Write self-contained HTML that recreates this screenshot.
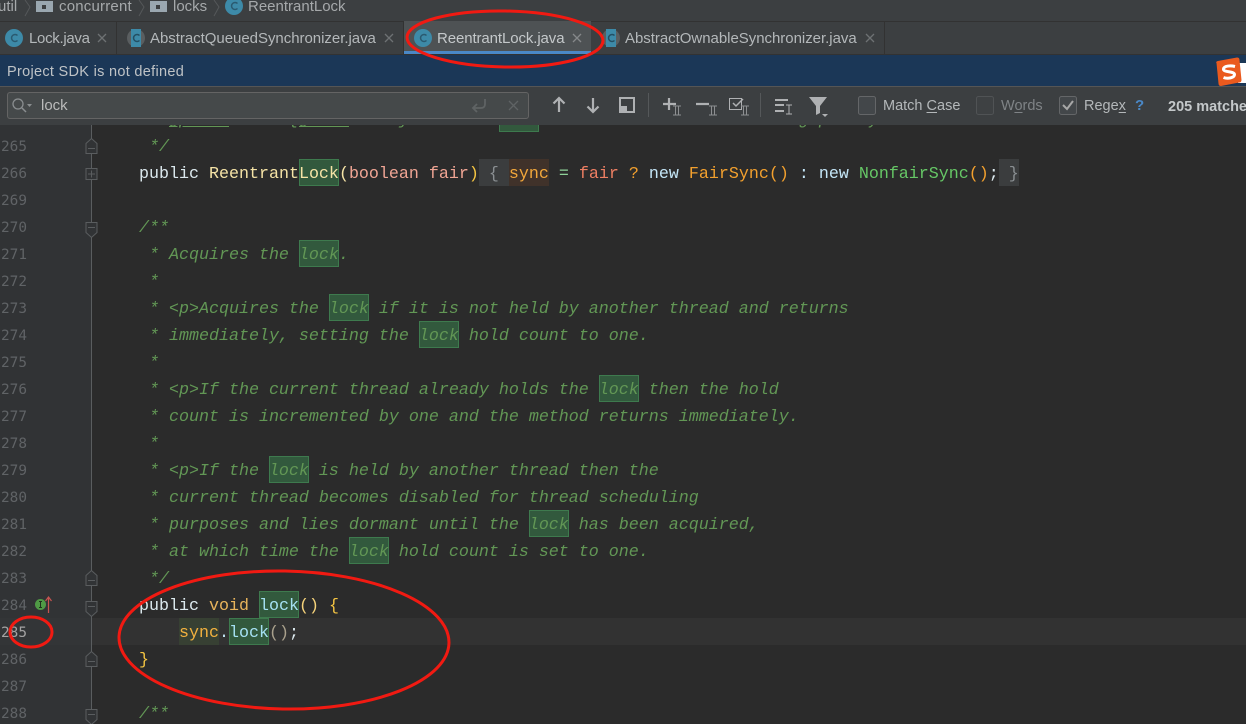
<!DOCTYPE html>
<html><head><meta charset="utf-8"><style>
html,body{margin:0;padding:0;background:#2b2b2b}
#r{position:relative;width:1246px;height:724px;overflow:hidden;background:#2b2b2b;font-family:"Liberation Sans",sans-serif}
.a{position:absolute}
.t{position:absolute;white-space:pre;color:#b4b8ba;font-size:15px;line-height:20px}
.l{position:absolute;left:139px;height:27px;white-space:pre;font:16.67px/27px "Liberation Mono",monospace;color:#629755;transform:translateY(2px)}
.c{font-style:italic}
.n{position:absolute;left:1px;font:14.4px/27px "DejaVu Sans Mono",monospace;color:#606366;transform:translateY(2px)}
.h{position:absolute;width:38px;height:25px;background:#32593d;border:1px solid #3e7a4e}
u{text-underline-offset:2px}
</style></head><body><div id="r">

<!-- editor backgrounds -->
<div class="a" style="left:0;top:124px;width:91px;height:600px;background:#313335"></div>
<div class="a" style="left:91px;top:618px;width:1155px;height:27px;background:#323232"></div>
<div class="a" style="left:0;top:618px;width:91px;height:27px;background:#333537"></div>

<!-- highlight boxes -->
<div class="h" style="left:499px;top:105px"></div>
<div class="h" style="left:299px;top:159px"></div>
<div class="h" style="left:299px;top:240px"></div>
<div class="h" style="left:329px;top:294px"></div>
<div class="h" style="left:419px;top:321px"></div>
<div class="h" style="left:599px;top:375px"></div>
<div class="h" style="left:269px;top:456px"></div>
<div class="h" style="left:529px;top:510px"></div>
<div class="h" style="left:349px;top:537px"></div>
<div class="h" style="left:259px;top:591px"></div>
<div class="h" style="left:229px;top:618px"></div>
<div class="a" style="left:479px;top:159px;width:30px;height:27px;background:#3b3d3e"></div>
<div class="a" style="left:509px;top:159px;width:40px;height:27px;background:#40322a"></div>
<div class="a" style="left:999px;top:159px;width:20px;height:27px;background:#3b3d3e"></div>
<div class="a" style="left:179px;top:618px;width:40px;height:27px;background:#374033"></div>

<!-- code -->
<div class="l c" style="top:105px"> * <u>@param</u> <span style="color:#c98a3a">fair</span> {<u>@code</u> true} if this lock should use a fair ordering policy.</div>
<div class="l c" style="top:132px"> */</div>
<div class="l" style="top:159px"><span style="color:#dce9ee">public</span> <span style="color:#f5e3a6">ReentrantLock</span><span style="color:#f5e3a6">(</span><span style="color:#f0a594">boolean fair</span><span style="color:#f5c542">)</span> <span style="color:#8a8f92">{</span> <span style="color:#f2a73b">sync</span> <span style="color:#8fd39a">=</span> <span style="color:#ee7f63">fair</span> <span style="color:#f2a02e">?</span> <span style="color:#c4e6f7">new</span> <span style="color:#f2a02e">FairSync()</span> <span style="color:#c4e6f7">:</span> <span style="color:#c4e6f7">new</span> <span style="color:#66c766">NonfairSync</span><span style="color:#f2a02e">()</span><span style="color:#dce9ee">;</span> <span style="color:#8a8f92">}</span></div>
<div class="l c" style="top:213px">/**</div>
<div class="l c" style="top:240px"> * Acquires the lock.</div>
<div class="l c" style="top:267px"> *</div>
<div class="l c" style="top:294px"> * &lt;p&gt;Acquires the lock if it is not held by another thread and returns</div>
<div class="l c" style="top:321px"> * immediately, setting the lock hold count to one.</div>
<div class="l c" style="top:348px"> *</div>
<div class="l c" style="top:375px"> * &lt;p&gt;If the current thread already holds the lock then the hold</div>
<div class="l c" style="top:402px"> * count is incremented by one and the method returns immediately.</div>
<div class="l c" style="top:429px"> *</div>
<div class="l c" style="top:456px"> * &lt;p&gt;If the lock is held by another thread then the</div>
<div class="l c" style="top:483px"> * current thread becomes disabled for thread scheduling</div>
<div class="l c" style="top:510px"> * purposes and lies dormant until the lock has been acquired,</div>
<div class="l c" style="top:537px"> * at which time the lock hold count is set to one.</div>
<div class="l c" style="top:564px"> */</div>
<div class="l" style="top:591px"><span style="color:#dce9ee">public</span> <span style="color:#e8b45c">void</span> <span style="color:#a5e0f2">lock</span><span style="color:#f5d27a">()</span> <span style="color:#f5c542">{</span></div>
<div class="l" style="top:618px">    <span style="color:#f2b13f">sync</span><span style="color:#c4e6f7">.</span><span style="color:#a5e0f2">lock</span><span style="color:#a9a08c">()</span><span style="color:#dce9ee">;</span></div>
<div class="l" style="top:645px;color:#f5c542">}</div>
<div class="l c" style="top:699px">/**</div>

<!-- line numbers -->
<div class="n" style="top:132px">265</div><div class="n" style="top:159px">266</div><div class="n" style="top:186px">269</div><div class="n" style="top:213px">270</div><div class="n" style="top:240px">271</div><div class="n" style="top:267px">272</div><div class="n" style="top:294px">273</div><div class="n" style="top:321px">274</div><div class="n" style="top:348px">275</div><div class="n" style="top:375px">276</div><div class="n" style="top:402px">277</div><div class="n" style="top:429px">278</div><div class="n" style="top:456px">279</div><div class="n" style="top:483px">280</div><div class="n" style="top:510px">281</div><div class="n" style="top:537px">282</div><div class="n" style="top:564px">283</div><div class="n" style="top:591px">284</div><div class="n" style="top:618px;color:#a4a3a3">285</div><div class="n" style="top:645px">286</div><div class="n" style="top:672px">287</div><div class="n" style="top:699px">288</div>

<!-- gutter svg -->
<svg class="a" style="left:0;top:0" width="130" height="724" fill="none" stroke="#5a5d5f" stroke-width="1">
<path d="M91.500 124V724"/>
<g fill="#313335" transform="translate(0,1)">
<path d="M86 152.500v-10l5.500-5 5.500 5v10z"/><path d="M88 147.500h7"/>
<rect x="86" y="167.500" width="11" height="11"/><path d="M88 173h7M91.500 169.500v7"/>
<path d="M86 221.500v10l5.500 5 5.500-5v-10z"/><path d="M88 226.500h7"/>
<path d="M86 584.500v-10l5.500-5 5.500 5v10z"/><path d="M88 579.500h7"/>
<path d="M86 600.500v10l5.500 5 5.500-5v-10z"/><path d="M88 605.500h7"/>
<path d="M86 665.500v-10l5.500-5 5.500 5v10z"/><path d="M88 660.500h7"/>
<path d="M86 708.500v10l5.500 5 5.500-5v-10z"/><path d="M88 713.500h7"/>
</g>
<circle cx="40.500" cy="604.500" r="5.500" fill="#4f9a45" stroke="none"/>
<path d="M40.500 601.500v6M39 601.500h3M39 607.500h3" stroke="#20301c"/>
<path d="M48.500 613V597M45.500 601l3-4 3 4" stroke="#c75450" stroke-width="1.200"/>
<path d="M259 614.500q2-1.600 4 0t4 0 4 0 4 0 4 0 4 0 4 0 4 0 4 0" stroke="#b0423a" stroke-width="1"/>
</svg>

<!-- top chrome -->
<div class="a" style="left:0;top:0;width:1246px;height:21px;background:#3c3f41;border-bottom:1px solid #323232"></div>
<div class="a" style="left:0;top:22px;width:1246px;height:32px;background:#3c3f41"></div>
<div class="a" style="left:404px;top:21px;width:187px;height:30px;background:#4e5254"></div>
<div class="a" style="left:403px;top:51px;width:188px;height:4px;background:#4a88c7"></div>
<div class="a" style="left:116px;top:21px;width:1px;height:33px;background:#323232"></div>
<div class="a" style="left:403px;top:21px;width:1px;height:33px;background:#323232"></div>
<div class="a" style="left:884px;top:21px;width:1px;height:33px;background:#323232"></div>
<div class="a" style="left:0;top:54px;width:1246px;height:1px;background:#323232"></div>
<div class="a" style="left:0;top:55px;width:1246px;height:31px;background:#1b3757"></div>
<div class="a" style="left:0;top:86px;width:1246px;height:38px;background:#3c3f41;border-top:1px solid #555"></div>
<div class="a" style="box-sizing:border-box;left:7px;top:92px;width:522px;height:27px;background:#45494a;border:1px solid #646464;border-radius:3px"></div>

<div class="t" style="left:-2px;top:-3px;color:#a6a9ab">util</div>
<div class="t" style="left:59px;top:-3px;color:#a6a9ab;letter-spacing:.2px">concurrent</div>
<div class="t" style="left:173px;top:-3px;color:#a6a9ab">locks</div>
<div class="t" style="left:248px;top:-3px;color:#a6a9ab">ReentrantLock</div>
<div class="t" style="left:29px;top:29px;letter-spacing:-.3px">Lock.java</div>
<div class="t" style="left:150px;top:29px;letter-spacing:-.03px">AbstractQueuedSynchronizer.java</div>
<div class="t" style="left:437px;top:29px;color:#c4c8ca;letter-spacing:-.1px">ReentrantLock.java</div>
<div class="t" style="left:625px;top:29px;letter-spacing:-.03px">AbstractOwnableSynchronizer.java</div>
<div class="t" style="left:7px;top:62px;font-size:14.5px;color:#bfc3c6;letter-spacing:.3px">Project SDK is not defined</div>
<div class="t" style="left:41px;top:96px;font-size:15px;color:#bbb">lock</div>
<div class="t" style="left:883px;top:96px;font-size:14.5px;color:#b4b8ba">Match <u>C</u>ase</div>
<div class="t" style="left:1001px;top:96px;font-size:14.5px;color:#7f8386">W<u>o</u>rds</div>
<div class="t" style="left:1084px;top:96px;font-size:14.5px;color:#b4b8ba">Rege<u>x</u></div>
<div class="t" style="left:1135px;top:96px;font-size:15px;font-weight:bold;color:#4a88c7">?</div>
<div class="t" style="left:1168px;top:97px;font-size:14.5px;font-weight:bold;color:#c4c8ca">205 matches</div>

<svg class="a" style="left:0;top:0" width="1246" height="124" fill="none">
<!-- breadcrumb -->
<g stroke="#55585a"><path d="M25 0l5 7-5 9M139 0l5 7-5 9M214 0l5 7-5 9"/></g>
<g fill="#9aa7b0"><path d="M36 1h17v11H36z"/><path d="M150 1h17v11h-17z"/></g>
<g fill="#3c3f41"><rect x="42" y="5" width="4" height="4"/><rect x="156" y="5" width="4" height="4"/></g>
<circle cx="234" cy="6" r="9" fill="#3d8aa8"/><path d="M237.500 3.500a3.500 3.500 0 1 0 0 5" stroke="#2a5a70" stroke-width="1.500"/>
<!-- tab icons -->
<circle cx="14" cy="38" r="9" fill="#3d8aa8"/><path d="M17.500 35.500a3.500 3.500 0 1 0 0 5" stroke="#2a5a70" stroke-width="1.500"/>
<circle cx="423" cy="38" r="9" fill="#3d8aa8"/><path d="M426.500 35.500a3.500 3.500 0 1 0 0 5" stroke="#2a5a70" stroke-width="1.500"/>
<circle cx="136" cy="38" r="9" fill="#5a5e60"/><rect x="131" y="29" width="10" height="18" fill="#3d8aa8"/><path d="M139.500 35.500a3.500 3.500 0 1 0 0 5" stroke="#234f63" stroke-width="1.500"/>
<circle cx="611" cy="38" r="9" fill="#5a5e60"/><rect x="606" y="29" width="10" height="18" fill="#3d8aa8"/><path d="M614.500 35.500a3.500 3.500 0 1 0 0 5" stroke="#234f63" stroke-width="1.500"/>
<g stroke="#6e7173" stroke-width="1.300"><path d="M98 34l8 8M106 34l-8 8M385 34l8 8M393 34l-8 8M866 34l8 8M874 34l-8 8"/><path d="M573 34l8 8M581 34l-8 8" stroke="#85888a"/></g>
<!-- sogou -->
<path d="M1238 63h8v20h-8z" fill="#fff"/>
<path d="M1217 63q-1-1 1-1.500l19-3.500q2 0 2 2l2 20q0 2-2 2l-18 3.500q-2 0-2-2z" fill="#ea5a1e" stroke="#ea5a1e"/>
<path d="M1235 66.500c-4-1-11-1-11.500 2.500s11 2 11 5.500-7 4.500-11 3" stroke="#fff" stroke-width="3"/>
<!-- search -->
<circle cx="18" cy="104" r="5" stroke="#8a8e90" stroke-width="1.300"/><path d="M22 108l4 4" stroke="#8a8e90" stroke-width="1.500"/><path d="M27 104h5l-2.500 3z" fill="#8a8e90"/>
<path d="M485 99v5q0 4-4 4h-8M477 104l-4 4 4 4" stroke="#5f6364" stroke-width="1.800"/>
<path d="M509 101l9 9M518 101l-9 9" stroke="#5f6364" stroke-width="1.300"/>
<!-- toolbar -->
<g stroke="#afb1b3" stroke-width="2.200"><path d="M559 112V98M553.500 103.500l5.500-5.500 5.500 5.500"/><path d="M593 98v14M587.500 106.500l5.500 5.500 5.500-5.500"/></g>
<path d="M620 98h14v14h-14z" stroke="#afb1b3" stroke-width="2"/><rect x="620" y="106" width="7" height="6" fill="#afb1b3"/>
<path d="M648.500 93v24M760.500 93v24" stroke="#55585a"/>
<g stroke="#afb1b3" stroke-width="2.200"><path d="M669 98v12M663 104h13M696 104h13"/></g>
<path d="M729.500 98.500h12v11h-12z" stroke="#afb1b3"/><path d="M733 103l3 3 7-7" stroke="#afb1b3" stroke-width="1.500"/>
<g stroke="#8d8f91" stroke-width="1"><path d="M673 106h8M673 115h8M675.500 106v9M678.500 106v9M709 106h8M709 115h8M711.500 106v9M714.500 106v9M741 106h8M741 115h8M743.500 106v9M746.500 106v9"/></g>
<g stroke="#afb1b3" stroke-width="2"><path d="M775 100h13M775 105h9M775 111h9"/></g><path d="M786 105h6M786 114h6M789 105v9" stroke="#afb1b3"/>
<path d="M809 97h18l-7 9v7l-4 2v-9z" fill="#afb1b3"/><path d="M822 114h6l-3 3z" fill="#afb1b3"/>
<!-- checkboxes -->
<rect x="858.500" y="96.500" width="17" height="18" rx="2" fill="#43474a" stroke="#646668"/>
<rect x="976.500" y="96.500" width="17" height="18" rx="2" fill="#3e4143" stroke="#505355"/>
<rect x="1059.500" y="96.500" width="17" height="18" rx="2" fill="#43474a" stroke="#646668"/>
<path d="M1063 105l4 4 6-8" stroke="#a7a7a7" stroke-width="2"/>
</svg>

<!-- red annotations -->
<svg class="a" style="left:0;top:0" width="1246" height="724" fill="none" stroke="#f11a12" stroke-width="3">
<ellipse cx="505" cy="39" rx="98" ry="28" transform="rotate(1 505 39)"/>
<ellipse cx="284" cy="640" rx="165" ry="69" transform="rotate(1 284 640)"/>
<ellipse cx="31" cy="632" rx="21" ry="15"/>
</svg>

</div></body></html>
